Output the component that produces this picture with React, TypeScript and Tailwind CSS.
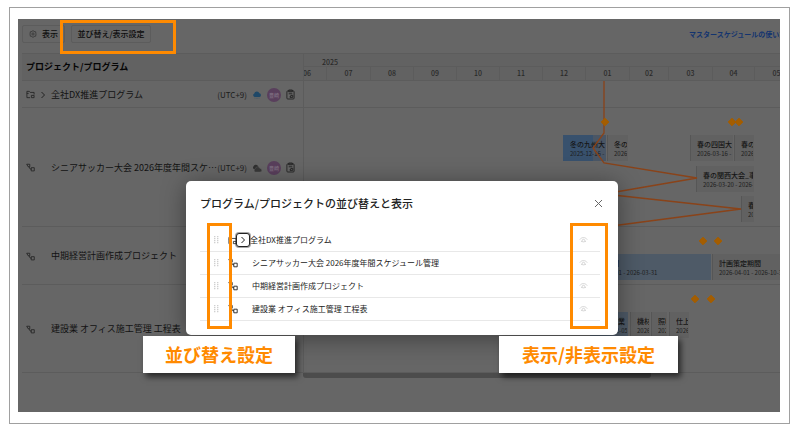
import type { ReactNode } from "react"

interface Bar {
  x: number
  y: number
  w: number
  title: string
  date: string
  tone?: "blue" | "pale"
  done?: number
}

interface Row {
  name: string
  height: string
  program?: boolean
  weather?: "rain" | "cloud"
  milestones: { x: number; y: number }[]
  bars: Bar[]
}

// x / y are offsets on the time axis of each row
const rows: Row[] = [
  { name: "全社DX推進プログラム", height: "h-[27px]", program: true, weather: "rain", milestones: [], bars: [] },
  {
    name: "シニアサッカー大会 2026年度年間スケジュール管理",
    height: "h-[119px]",
    weather: "cloud",
    milestones: [{ x: 301, y: 14 }, { x: 428, y: 14 }, { x: 435, y: 14 }],
    bars: [
      { x: 259, y: 27, w: 43, title: "冬の九州大会", date: "2025-12-16 - 2026-01-15", tone: "blue", done: 30 },
      { x: 303, y: 27, w: 21, title: "冬の大会", date: "2026-01-16" },
      { x: 386, y: 27, w: 43, title: "春の四国大会", date: "2026-03-16 - 2026-04-15" },
      { x: 430, y: 27, w: 20, title: "春の大会", date: "2026-04-16" },
      { x: 392, y: 58, w: 58, title: "春の関西大会_事前", date: "2026-03-20 - 2026-05-10" },
      { x: 437, y: 88, w: 13, title: "春の", date: "2026" },
    ],
  },
  {
    name: "中期経営計画作成プロジェクト",
    height: "h-[58px]",
    milestones: [{ x: 399, y: 14 }, { x: 414, y: 14 }],
    bars: [
      { x: 280, y: 27, w: 127, title: "準備期間", date: "2025-10-01 - 2026-03-31", tone: "pale" },
      { x: 408, y: 27, w: 90, title: "計画策定期間", date: "2026-04-01 - 2026-10-31" },
    ],
  },
  {
    name: "建設業 オフィス施工管理 工程表",
    height: "h-[88px]",
    milestones: [{ x: 391, y: 14 }, { x: 407, y: 14 }],
    bars: [
      { x: 286, y: 27, w: 38, title: "内装作業", date: "2025-12-05", tone: "pale" },
      { x: 326, y: 27, w: 20, title: "機材搬入", date: "2026-01" },
      { x: 347, y: 27, w: 16, title: "照明", date: "2026" },
      { x: 365, y: 27, w: 20, title: "仕上げ", date: "2026-02" },
    ],
  },
]

const months = [
  { label: "06", w: 23 },
  { label: "07", w: 44 },
  { label: "08", w: 43 },
  { label: "09", w: 43 },
  { label: "10", w: 43 },
  { label: "11", w: 43 },
  { label: "12", w: 43 },
  { label: "01", w: 44 },
  { label: "02", w: 39 },
  { label: "03", w: 44 },
  { label: "04", w: 42 },
  { label: "05", w: 44 },
]

function FolderIcon() {
  return (
    <svg viewBox="0 0 10 10" className="size-[9px] shrink-0" fill="none" stroke="currentColor" strokeWidth="0.9">
      <path d="M4.5 8.5H1V1.5H3.7L4.7 2.7H9V5" />
      <path d="M6 6H9V8.5H6ZM1 3.8H3" />
    </svg>
  )
}

function ProjectIcon({ className = "size-[9px]" }: { className?: string }) {
  return (
    <svg viewBox="0 0 10 10" className={`shrink-0 ${className}`} fill="none" stroke="currentColor" strokeWidth="0.9">
      <path d="M0.8 1.4H4.2V4.2H2.4ZM3.2 4.2L4.8 6.8H6M5.8 5.2H9.2V8.8H5.8Z" />
    </svg>
  )
}

function Chevron() {
  return (
    <svg viewBox="0 0 8 8" className="size-2" fill="none" stroke="currentColor" strokeWidth="1">
      <path d="M2.5 1L5.5 4L2.5 7" />
    </svg>
  )
}

function Weather({ kind }: { kind: "rain" | "cloud" }) {
  if (kind === "rain") {
    return (
      <svg viewBox="0 0 10 10" className="size-[10px] shrink-0 text-[#1f4868]">
        <path fill="currentColor" d="M2.6 7A1.9 1.9 0 0 1 2.3 3.4A2.7 2.7 0 0 1 7.4 3.3A1.9 1.9 0 0 1 7.5 7Z" />
        <path stroke="currentColor" strokeWidth="0.6" strokeOpacity="0.7" d="M3 7.6V8.6M5 7.6V9M7 7.6V8.6" />
      </svg>
    )
  }
  return (
    <svg viewBox="0 0 10 10" className="size-[10px] shrink-0">
      <path fill="#303030" d="M2.2 6.2A1.7 1.7 0 0 1 1.6 3.3A2.3 2.3 0 0 1 5.8 2.8L7 4.4Z" />
      <path fill="#383838" stroke="#666" strokeWidth="0.4" d="M3.6 9A1.8 1.8 0 0 1 3.3 5.6A2.4 2.4 0 0 1 7.9 5.4A1.8 1.8 0 0 1 8 9Z" />
    </svg>
  )
}

function ClipboardIcon() {
  return (
    <svg viewBox="0 0 10 12" className="h-[11px] w-[9px] shrink-0 text-[#222]" fill="none" stroke="currentColor" strokeWidth="1">
      <rect x="1" y="2" width="8" height="9" rx="1" />
      <path d="M3 1H7V3H3ZM3 5.2H7M5.5 7H7.5V9.2H4.5V8H5.5Z" />
    </svg>
  )
}

function EyeIcon() {
  return (
    <svg viewBox="0 0 9 8" className="h-2 w-[9px]" fill="none" stroke="currentColor" strokeWidth="0.9">
      <path d="M0.8 3.6C2.6 0.9 6.4 0.9 8.2 3.6M2 5C2.4 5.4 2.8 5.7 3.2 5.9M7 5C6.6 5.4 6.2 5.7 5.8 5.9" />
      <circle cx="4.5" cy="4.6" r="1.3" />
    </svg>
  )
}

function DragDots() {
  return (
    <svg viewBox="0 0 5 8" className="h-2 w-[5px]" fill="currentColor">
      {[0, 2, 4, 6].map((y) => (
        <path key={y} d={`M0 ${y}h1.4v1.2h-1.4zM3 ${y}h1.4v1.2h-1.4z`} />
      ))}
    </svg>
  )
}

function GanttBar({ bar }: { bar: Bar }) {
  const tone =
    bar.tone === "blue" ? "bg-[#4a5665]" : bar.tone === "pale" ? "bg-[#4e5a67]" : "border-l border-[#565656] bg-[#616161]"
  return (
    <div
      className={`absolute h-[26px] overflow-hidden pr-px whitespace-nowrap ${bar.tone ? "pl-[7px]" : "pl-[6px]"} ${tone}`}
      style={{ left: bar.x, top: bar.y, width: bar.w }}
    >
      {bar.done && <div className="absolute inset-y-0 left-0 bg-[#38516d]" style={{ width: bar.done }} />}
      <div className="relative overflow-hidden pt-[4px]">
        <div className="text-[7px] leading-[11px] font-medium text-[#151515]">{bar.title}</div>
        <div className="text-[6px] leading-[8px] text-[#1c1c1c]">{bar.date}</div>
      </div>
    </div>
  )
}

function ProjectRow({ row }: { row: Row }) {
  return (
    <div className={`flex border-b border-[#5c5c5c] ${row.height}`}>
      <div className="flex w-[282px] shrink-0 items-center border-r border-[#5c5c5c] pt-px pr-[8px] pl-[4px] text-[#222]">
        <div className="flex w-[25px] shrink-0 items-center gap-[4px]">
          {row.program ? <FolderIcon /> : <ProjectIcon />}
          {row.program && (
            <button aria-label="展開">
              <Chevron />
            </button>
          )}
        </div>
        <span className="min-w-0 flex-1 truncate text-[9px] leading-[14px] text-[#121212]">{row.name}</span>
        {row.weather && (
          <div className="flex shrink-0 items-center gap-[5px]">
            <span className="text-[8px] text-[#1c1c1c]">(UTC+9)</span>
            <Weather kind={row.weather} />
            <span className="flex size-[14px] items-center justify-center rounded-full bg-[#593f5c] text-[5px] font-bold text-[#7a697d]">豊崎</span>
            <ClipboardIcon />
          </div>
        )}
      </div>
      <div className="relative min-w-0 flex-1 overflow-hidden">
        {row.bars.map((bar) => (
          <GanttBar key={bar.title} bar={bar} />
        ))}
      </div>
    </div>
  )
}

function Milestones({ row }: { row: Row }) {
  return (
    <div className={`relative ${row.height}`}>
      {row.milestones.map((m) => (
        <svg key={m.x} viewBox="0 0 10 10" className="absolute size-[10px] -translate-x-1/2 -translate-y-1/2" style={{ left: m.x, top: m.y }}>
          <path fill="#a45d00" stroke="#a45d00" strokeLinejoin="round" d="M5 1.2L8.8 5L5 8.8L1.2 5Z" />
        </svg>
      ))}
    </div>
  )
}

function SortDialog() {
  return (
    <div
      role="dialog"
      aria-labelledby="sort-title"
      className="absolute top-[162px] left-[168px] w-[432px] rounded-[5px] bg-white px-[14px] pb-[14px] text-[#222] shadow-[0_3px_24px_rgba(0,0,0,0.4)]"
    >
      <div className="flex h-[48px] items-center justify-between pr-[1px] pb-[4px]">
        <h2 id="sort-title" className="text-[11px] leading-[16px] font-medium">プログラム/プロジェクトの並び替えと表示</h2>
        <button aria-label="閉じる" className="text-[#666]">
          <svg viewBox="0 0 9 9" className="size-[9px]" fill="none" stroke="currentColor" strokeWidth="1">
            <path d="M1 1L8 8M8 1L1 8" />
          </svg>
        </button>
      </div>
      <ul className="mr-[4px]">
        {rows.map((row) => (
          <li key={row.name} className="flex h-[23px] items-center border-b border-[#e8e8e8] pr-[12px] pl-[14px]">
            <button aria-label="並び替え" className="w-[14px] shrink-0 text-[#d0d0d0]">
              <DragDots />
            </button>
            {row.program ? (
              <div className="flex w-[22px] shrink-0 items-center">
                <div className="w-[8px] overflow-hidden">
                  <FolderIcon />
                </div>
                <button aria-label="展開" className="flex size-[14px] shrink-0 items-center justify-center rounded-[3px] border border-[#222] bg-white ring-1 ring-[#222]/40">
                  <Chevron />
                </button>
              </div>
            ) : (
              <div className="w-[24px] shrink-0">
                <ProjectIcon className="size-[10px]" />
              </div>
            )}
            <span className="flex-1 text-[8px] leading-[12px]">{row.name}</span>
            <button aria-label="表示/非表示" className="text-[#cfcfcf]">
              <EyeIcon />
            </button>
          </li>
        ))}
      </ul>
    </div>
  )
}

function Callout({ className, children }: { className: string; children: ReactNode }) {
  return (
    <div className={`absolute top-[317px] flex h-[37px] items-center justify-center bg-white pb-[2px] text-[18px] leading-none font-bold text-[#ff8a00] shadow-[3px_4px_6px_rgba(0,0,0,0.6)] ${className}`}>
      {children}
    </div>
  )
}

export default function App() {
  return (
    <main className="bg-white pt-[7px] pr-[4px] pb-[4px] pl-[9px] font-['Noto_Sans_CJK_JP',sans-serif]" lang="ja">
      <div className="border border-[#a0a0a0] pt-[11px] pr-[9px] pb-[11px] pl-[8px]">
        <div className="relative overflow-hidden bg-[#666]">
          <header className="flex h-[34px] items-center gap-[6px] pb-[5px] pl-[4px]">
            <button className="flex h-[18px] w-[43px] shrink-0 items-center gap-[5px] rounded-[2px] border border-[#5c5c5c] pl-[6px] text-[8px] font-medium text-[#0c0c0c]">
              <svg viewBox="0 0 10 10" className="size-[8px] shrink-0" fill="none" stroke="#333" strokeWidth="1">
                <path d="M5 0.7L6.3 1.8L8.4 2.3L8.5 4.2L9.2 5L8.5 5.9L8.4 7.7L6.4 8.1L5 9.3L3.6 8.1L1.6 7.7L1.5 5.9L0.8 5L1.5 4.2L1.6 2.3L3.7 1.8Z" />
                <circle cx="5" cy="5" r="1.4" />
              </svg>
              表示
            </button>
            <button className="h-[18px] w-[80px] shrink-0 rounded-[2px] border border-[#5c5c5c] text-[8px] font-medium text-[#0c0c0c]">並び替え/表示設定</button>
            <a href="#help" className="ml-auto w-[91px] overflow-hidden pt-px text-[7px] leading-[12px] font-bold whitespace-nowrap text-[#13346f]">
              マスタースケジュールの使い方
            </a>
          </header>

          <section className="ml-[4px]">
            <div className="flex h-[28px] border-y border-[#5c5c5c] bg-[#626262]">
              <div className="flex w-[282px] shrink-0 items-center border-r border-[#5c5c5c] pl-[4px] text-[9px] font-bold text-[#050505]">
                プロジェクト/プログラム
              </div>
              <div className="min-w-0 flex-1 overflow-hidden text-[7px] font-medium text-[#2a2a2a]">
                <div className="h-[13px] border-b border-[#5c5c5c] pt-[3px] pl-[18px] leading-[10px]">2025</div>
                <div className="flex leading-[13px]">
                  {months.map((m, i) => (
                    <div key={m.label} className={`shrink-0 border-r border-[#5c5c5c] ${i === 0 ? "-indent-[1px]" : "text-center"}`} style={{ width: m.w }}>
                      {m.label}
                    </div>
                  ))}
                </div>
              </div>
            </div>

            <div className="relative">
              {rows.map((row) => (
                <ProjectRow key={row.name} row={row} />
              ))}
              {/* progress line and milestones run across all rows */}
              <div className="absolute inset-y-0 right-0 left-[282px] overflow-hidden">
                <svg className="absolute inset-0 h-full w-full" fill="none" stroke="#8a4319" strokeWidth="1.3">
                  <path d="M300 0V52L289 67L300 82L393 97L300 113L437 128L300 146" />
                </svg>
                {rows.map((row) => (
                  <Milestones key={row.name} row={row} />
                ))}
              </div>
            </div>
            <div className="ml-[281px] h-[5px] w-[348px] rounded-b-[3px] bg-[#4c4c4c]" />
            <div className="h-[34px]" />
          </section>

          <SortDialog />

          <div className="absolute top-px left-[42px] h-[34px] w-[116px] border-3 border-[#ff8a00]" />
          <div className="absolute top-[204px] left-[189px] h-[106px] w-[25px] border-3 border-[#ff8a00]" />
          <div className="absolute top-[204px] left-[552px] h-[106px] w-[38px] border-3 border-[#ff8a00]" />
          <Callout className="left-[125px] w-[152px]">並び替え設定</Callout>
          <Callout className="left-[481px] w-[179px]">表示/非表示設定</Callout>
        </div>
      </div>
    </main>
  )
}
